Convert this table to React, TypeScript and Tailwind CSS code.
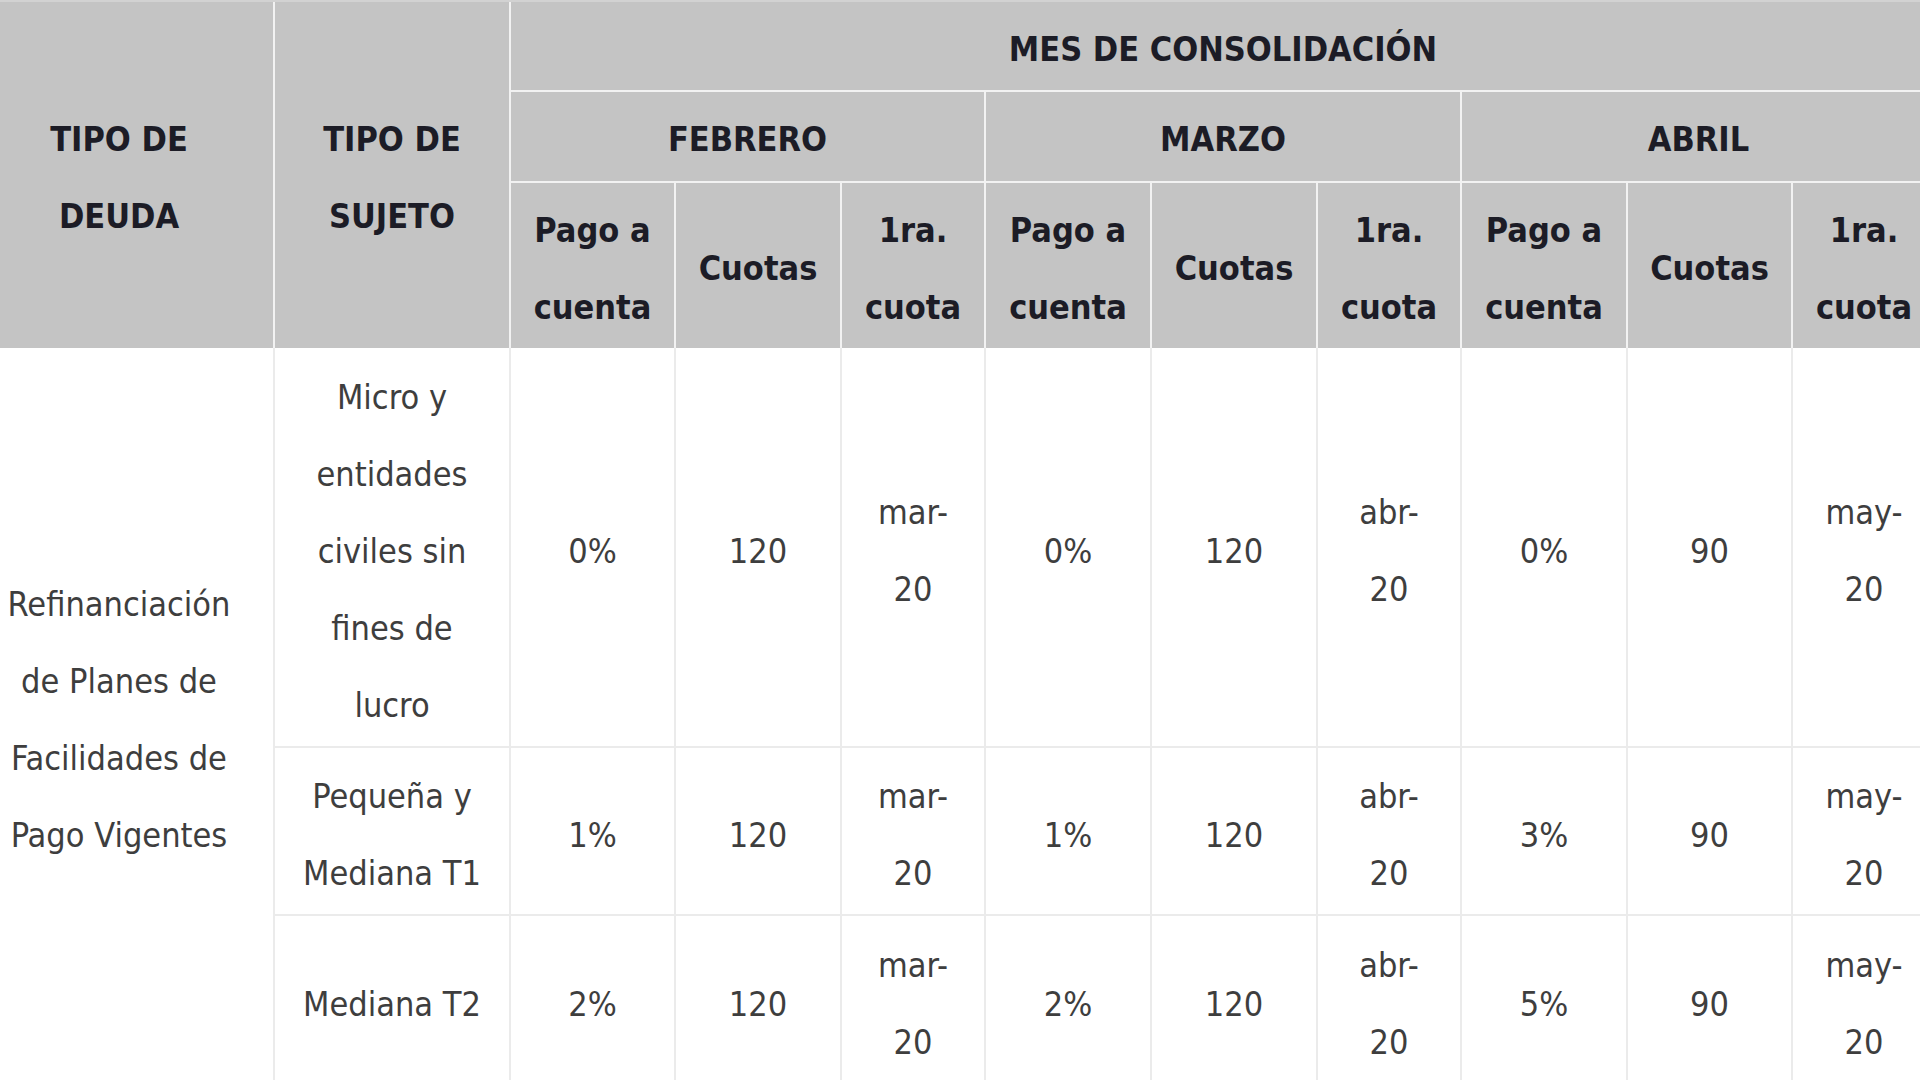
const cols =
  'grid-cols-[308px_234px_163px_164px_142px_164px_164px_142px_164px_163px_142px]';

type Row = {
  sujeto: React.ReactNode;
  cells: React.ReactNode[];
};

const rows: Row[] = [
  {
    sujeto: (
      <>
        Micro y<br />
        entidades<br />
        civiles sin<br />
        fines de<br />
        lucro
      </>
    ),
    cells: ['0%', '120', 'mar-|20', '0%', '120', 'abr-|20', '0%', '90', 'may-|20'],
  },
  {
    sujeto: (
      <>
        Pequeña y<br />
        Mediana T1
      </>
    ),
    cells: ['1%', '120', 'mar-|20', '1%', '120', 'abr-|20', '3%', '90', 'may-|20'],
  },
  {
    sujeto: <>Mediana T2</>,
    cells: ['2%', '120', 'mar-|20', '2%', '120', 'abr-|20', '5%', '90', 'may-|20'],
  },
];

function lines(text: React.ReactNode) {
  if (typeof text !== 'string' || !text.includes('|')) return text;
  const [a, b] = text.split('|');
  return (
    <>
      {a}
      <br />
      {b}
    </>
  );
}

function HeadCell({ children, className = '' }: { children: React.ReactNode; className?: string }) {
  return (
    <div
      className={`flex items-center justify-center bg-[#c4c4c4] pt-[6px] text-center font-bold text-[#1c1c26] ${className}`}
    >
      <div>{children}</div>
    </div>
  );
}

function BodyCell({ children, className = '' }: { children: React.ReactNode; className?: string }) {
  return (
    <div
      className={`flex items-center justify-center bg-white pt-[8px] text-center text-[#3e3e3e] ${className}`}
    >
      <div>{children}</div>
    </div>
  );
}

const subHeads = ['Pago a|cuenta', 'Cuotas', '1ra.|cuota'];

export default function App() {
  return (
    <div className="h-[1080px] w-[1920px] overflow-hidden bg-white">
      <div
        className="-ml-[35px] w-[1980px] text-[34px] leading-[77px]"
        style={{ fontFamily: '"DejaVu Sans Condensed", "DejaVu Sans", sans-serif' }}
      >
        {/* Header */}
        <div className={`grid ${cols} grid-rows-[88px_89px_165px] gap-[2px] border-t-2 border-[#d2d2d2] bg-[#f2f2f2]`}>
          <HeadCell className="row-span-3">
            TIPO DE
            <br />
            DEUDA
          </HeadCell>
          <HeadCell className="row-span-3">
            TIPO DE
            <br />
            SUJETO
          </HeadCell>
          <HeadCell className="col-span-9">MES DE CONSOLIDACIÓN</HeadCell>
          <HeadCell className="col-span-3">FEBRERO</HeadCell>
          <HeadCell className="col-span-3">MARZO</HeadCell>
          <HeadCell className="col-span-3">ABRIL</HeadCell>
          {[0, 1, 2].flatMap((m) =>
            subHeads.map((s, i) => <HeadCell key={`${m}-${i}`}>{lines(s)}</HeadCell>)
          )}
        </div>

        {/* Body */}
        <div className={`grid ${cols} grid-rows-[398px_166px_168px] gap-[2px] bg-[#ebebeb]`}>
          <BodyCell className="row-span-3">
            Refinanciación
            <br />
            de Planes de
            <br />
            Facilidades de
            <br />
            Pago Vigentes
          </BodyCell>
          {rows.flatMap((r, ri) => [
            <BodyCell key={`s-${ri}`}>{r.sujeto}</BodyCell>,
            ...r.cells.map((c, ci) => <BodyCell key={`${ri}-${ci}`}>{lines(c)}</BodyCell>),
          ])}
        </div>
      </div>
    </div>
  );
}
